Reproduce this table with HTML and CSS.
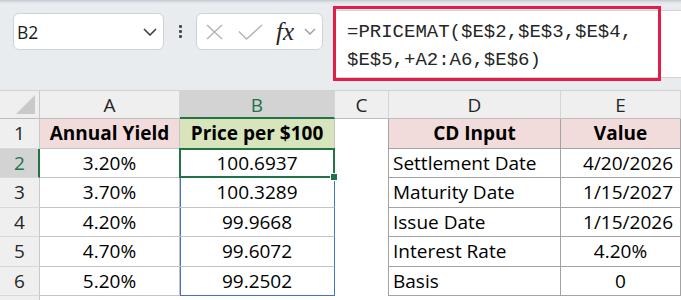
FILE: index.html
```html
<!DOCTYPE html>
<html>
<head>
<meta charset="utf-8">
<link rel="stylesheet" href="styles.css">
</head>
<body>
<div class="toolbar">
  <div class="namebox">
    <span class="name">B2</span>
    <svg class="chev" width="14" height="8" viewBox="0 0 14 8"><polyline points="1,1 7,7 13,1" fill="none" stroke="#404040" stroke-width="1.6"/></svg>
  </div>
  <div class="dots"><span></span><span></span><span></span></div>
  <div class="fnbox">
    <svg class="ico-x" width="17" height="16" viewBox="0 0 17 16"><path d="M1 1 L16 15 M16 1 L1 15" stroke="#b4b4b4" stroke-width="1.5" fill="none"/></svg>
    <svg class="ico-check" width="25" height="16" viewBox="0 0 25 16"><polyline points="1,7.5 8.5,15 24,1" fill="none" stroke="#b4b4b4" stroke-width="1.5"/></svg>
    <span class="fx">fx</span>
    <svg class="chev-s" width="12" height="7" viewBox="0 0 12 7"><polyline points="1,1 6,6 11,1" fill="none" stroke="#9a9a9a" stroke-width="1.4"/></svg>
  </div>
  <div class="formula">
    <div class="ftext">=PRICEMAT($E$2,$E$3,$E$4,<br>$E$5,+A2:A6,$E$6)</div>
    <div class="highlight"></div>
  </div>
</div>
<div class="grid">
  <div class="corner"><svg width="19" height="19" viewBox="0 0 19 19"><polygon points="19,0 19,19 0,19" fill="#c9c9c9"/></svg></div>
  <div class="ch">A</div>
  <div class="ch sel">B</div>
  <div class="ch">C</div>
  <div class="ch">D</div>
  <div class="ch">E</div>

  <div class="rh">1</div>
  <div class="cell bab pink bold center">Annual Yield</div>
  <div class="cell bab green bold center">Price per $100</div>
  <div class="cell cc"></div>
  <div class="cell bde pink bold center">CD Input</div>
  <div class="cell bde pink bold center">Value</div>

  <div class="rh sel">2</div>
  <div class="cell bab center">3.20%</div>
  <div class="cell bab spl center active">100.6937<span class="selbox"><span class="handle"></span></span></div>
  <div class="cell cc"></div>
  <div class="cell bde left">Settlement Date</div>
  <div class="cell bde right">4/20/2026</div>

  <div class="rh">3</div>
  <div class="cell bab center">3.70%</div>
  <div class="cell bab spl center">100.3289</div>
  <div class="cell cc"></div>
  <div class="cell bde left">Maturity Date</div>
  <div class="cell bde right">1/15/2027</div>

  <div class="rh">4</div>
  <div class="cell bab center">4.20%</div>
  <div class="cell bab spl center">99.9668</div>
  <div class="cell cc"></div>
  <div class="cell bde left">Issue Date</div>
  <div class="cell bde right">1/15/2026</div>

  <div class="rh">5</div>
  <div class="cell bab center">4.70%</div>
  <div class="cell bab spl center">99.6072</div>
  <div class="cell cc"></div>
  <div class="cell bde left">Interest Rate</div>
  <div class="cell bde center">4.20%</div>

  <div class="rh">6</div>
  <div class="cell bab center">5.20%</div>
  <div class="cell bab spl spl-end center">99.2502</div>
  <div class="cell cc"></div>
  <div class="cell bde left">Basis</div>
  <div class="cell bde center">0</div>

  <div class="rh last"></div>
</div>
</body>
</html>
```
FILE: styles.css
```css
html, body {
  margin: 0;
  padding: 0;
}
body {
  width: 681px;
  height: 300px;
  overflow: hidden;
  background: #ffffff;
  font-family: "Open Sans", "Noto Sans", sans-serif;
}

/* ---------- toolbar ---------- */
.toolbar {
  height: 90px;
  box-sizing: border-box;
  padding: 13px 0 0 13px;
  display: flex;
  align-items: flex-start;
  background: linear-gradient(#c3c7cb 0px, #dde1e5 2px, #e8ecef 4px, #e8ecef 100%);
}
.namebox {
  width: 151px;
  height: 37px;
  box-sizing: border-box;
  background: #fff;
  border: 1px solid #cfd3d7;
  border-radius: 6px;
  display: flex;
  align-items: center;
  justify-content: space-between;
  padding: 0 6px 0 3px;
}
.name {
  font-size: 17.5px;
  color: #1b1b1b;
  font-family: "Open Sans", sans-serif;
}
.dots {
  width: 32px;
  height: 37px;
  display: flex;
  flex-direction: column;
  align-items: center;
  justify-content: center;
  gap: 2px;
}
.dots span {
  width: 3px;
  height: 3px;
  background: #4a4a4a;
  border-radius: 1px;
}
.fnbox {
  width: 127px;
  height: 37px;
  box-sizing: border-box;
  background: #fff;
  border: 1px solid #cfd3d7;
  border-radius: 6px;
  display: flex;
  align-items: center;
  padding-left: 9px;
}
.ico-check {
  margin-left: 15px;
}
.fx {
  margin-left: 13px;
  font-family: "Liberation Serif", "DejaVu Serif", serif;
  font-style: italic;
  font-size: 25px;
  color: #262626;
  letter-spacing: 0;
  line-height: 1;
  position: relative;
  top: 0;
}
.chev-s {
  margin-left: 10px;
}
.formula {
  margin-left: 10px;
  margin-top: -3px;
  flex: 1;
  height: 68px;
  box-sizing: border-box;
  background: #fff;
  border: 1px solid #cfd3d7;
  border-right: none;
  position: relative;
}
.ftext {
  font-family: "Liberation Mono", "DejaVu Sans Mono", monospace;
  font-size: 19px;
  line-height: 28px;
  color: #262626;
  padding: 7px 0 0 13px;
  white-space: nowrap;
}
.highlight {
  position: absolute;
  left: -1px;
  top: -5px;
  width: 328px;
  height: 75px;
  box-sizing: border-box;
  border: 3px solid #e11d48;
}

/* ---------- grid ---------- */
.grid {
  display: grid;
  grid-template-columns: 40px 140px 155px 54px 172px 120px;
  grid-template-rows: 28px repeat(6, 29.5px) 1fr;
  height: 210px;
  box-sizing: border-box;
  border-top: 1px solid #d2d2d2;
  font-size: 19px;
}
.grid > div {
  box-sizing: border-box;
  display: flex;
  align-items: center;
  white-space: nowrap;
  overflow: hidden;
}
.corner {
  background: #efefef;
  border-right: 1px solid #c8c8c8;
  border-bottom: 1px solid #bdbdbd;
  justify-content: flex-end;
  align-items: flex-end !important;
  padding: 0 4px 4px 0;
}
.ch {
  background: #efefef;
  border-right: 1px solid #d5d5d5;
  border-bottom: 1px solid #bdbdbd;
  justify-content: center;
  color: #262626;
}
.ch.sel {
  background: #d3d3d3;
  color: #217346;
  border-bottom: 2px solid #217346;
  padding-top: 1px;
}
.rh {
  background: #efefef;
  border-right: 1px solid #c8c8c8;
  border-bottom: 1px solid #d8d8d8;
  justify-content: center;
  color: #262626;
}
.rh.sel {
  background: #d3d3d3;
  color: #217346;
  border-right: 2px solid #217346;
  padding-left: 1px;
}
.rh.last {
  border-bottom: none;
}
.cell {
  color: #000;
}
.bab {
  border-right: 1px solid #c3c3c3;
  border-bottom: 1px solid #c3c3c3;
}
.bde {
  border-right: 1px solid #a3a3a3;
  border-bottom: 1px solid #a3a3a3;
}
.cc {
  border-right: 1px solid #a3a3a3;
}
.pink {
  background: #f2dcdb;
}
.green {
  background: #d8e4bc;
}
.bold {
  font-weight: 700;
}
.center {
  justify-content: center;
}
.left {
  justify-content: flex-start;
  padding-left: 4px;
}
.right {
  justify-content: flex-end;
  padding-right: 7px;
}

/* spill range B2:B6 (blue outline) */
.spl {
  border-right-color: #4472c4;
  box-shadow: inset 1px 0 0 #4472c4;
}
.spl-end {
  border-bottom-color: #4472c4;
}

/* active cell B2 */
.grid > .active {
  position: relative;
  overflow: visible;
  z-index: 2;
}
.selbox {
  position: absolute;
  left: -1px;
  top: -1px;
  right: -1px;
  bottom: -1px;
  border: 2px solid #217346;
}
.handle {
  position: absolute;
  right: -5px;
  bottom: -5px;
  width: 6px;
  height: 6px;
  background: #217346;
  border: 1px solid #fff;
}
```
